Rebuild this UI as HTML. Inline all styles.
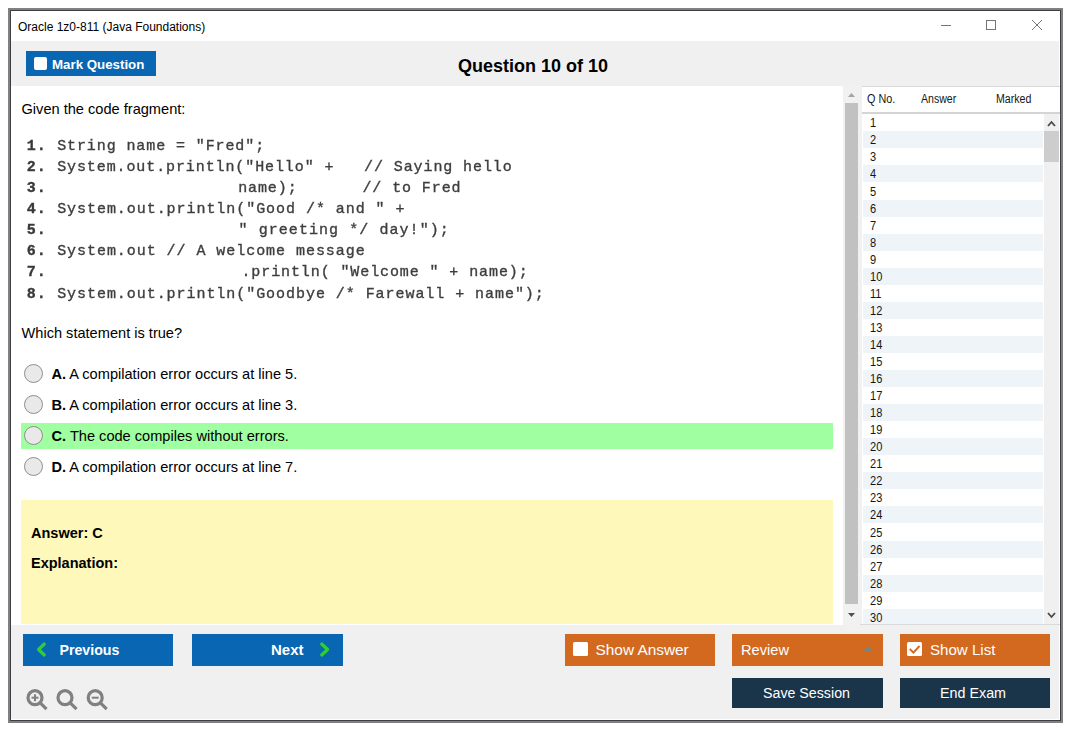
<!DOCTYPE html>
<html>
<head>
<meta charset="utf-8">
<title>Oracle 1z0-811 (Java Foundations)</title>
<style>
*{box-sizing:border-box;margin:0;padding:0}
html,body{width:1075px;height:735px;background:#fff;overflow:hidden}
body{font-family:"Liberation Sans",sans-serif;color:#000;position:relative}
.abs{position:absolute}
svg{position:absolute;overflow:visible}
#win-outer{left:8px;top:8px;width:1055px;height:715px;background:#808080}
#win-dark{left:10px;top:10px;width:1051px;height:711px;background:#3b3e42}
#win{left:11px;top:11px;width:1049px;height:709px;background:#fff}
#title{left:18px;top:20px;font-size:12px;line-height:14px;color:#000;white-space:nowrap}
#toolbar{left:11px;top:41px;width:1048px;height:45px;background:#f0f0f0}
#markbtn{left:26px;top:51px;width:130px;height:25px;background:#0866b3}
#markbtn .cb{left:8px;top:6px;width:13px;height:13px;background:#fff;border-radius:2px}
#markbtn .tx{left:26px;top:6px;font-size:13.3px;line-height:16px;font-weight:bold;color:#fff;white-space:nowrap}
#qtitle{left:458px;top:55px;font-size:18px;line-height:22px;font-weight:bold;white-space:nowrap}
#main{left:11px;top:86px;width:832px;height:539px;background:#fff}
.qt{left:21.5px;font-size:14.6px;line-height:18px;white-space:nowrap;color:#000;transform-origin:0 14px;transform:scaleY(1.04)}
#code{left:27px;top:135.6px;font-family:"Liberation Mono",monospace;font-size:15px;letter-spacing:0.9px;line-height:21.14px;color:#3e3e3e;-webkit-text-stroke:0.35px #3e3e3e;white-space:pre;filter:blur(0.3px)}
.cl{position:absolute;left:0;height:21.14px}
.cl span{position:absolute;top:0}
#code b{font-weight:bold;color:#383838}
.radio{left:24px;width:19px;height:19px;border-radius:50%;background:#e9e9e9;border:1px solid #8e8e8e}
.opt{left:51.5px;font-size:14.6px;line-height:18px;white-space:nowrap;transform-origin:0 14px;transform:scaleY(1.04)}
#hl{left:21px;top:423px;width:812px;height:26px;background:#a0ffa0}
#ansbox{left:21px;top:500px;width:812px;height:124px;background:#fef8ba}
.ab{left:31px;font-size:14.5px;font-weight:bold;line-height:16px;white-space:nowrap}
#mscroll{left:843px;top:86px;width:19px;height:539px;background:#f1f1f1}
#mthumb{left:845px;top:103px;width:13px;height:501px;background:#c1c1c1}
#list{left:862px;top:86px;width:198px;height:539px;background:#fff;border-top:1px solid #d9d9d9;border-bottom:1px solid #dcdcdc}
.lh{top:92px;font-size:12px;line-height:14px;color:#151515;white-space:nowrap;transform-origin:0 0;transform:scaleX(.9)}
#lhline{left:862px;top:112px;width:198px;height:2px;background:#d4d4d4}
.row{left:863px;width:180px;height:17px;font-size:12px;line-height:17px;color:#151515}
.row span{position:absolute;left:7px;top:1px;transform-origin:0 0;transform:scaleX(.92);white-space:nowrap}
#lscroll{left:1044px;top:114px;width:15px;height:510px;background:#f0f0f0}
#lthumb{left:1044px;top:131px;width:15px;height:31px;background:#cdcdcd}
#bottom{left:11px;top:625px;width:1048px;height:94px;background:#f0f0f0}
.btn{height:32px;width:150px;top:634px}
.btn2{height:30px;width:150px;top:678px}
.blue{background:#0866b3}
.orange{background:#d2691e}
.navy{background:#1a354a}
.btxt{color:#fff;white-space:nowrap;transform-origin:0 50%}
.bb{font-weight:bold;line-height:18px;top:7.25px}
.br{font-size:15.4px;line-height:18px;top:7px}
.cb2{width:15px;height:14px;background:#fff;border-radius:1.5px;top:8px}
</style>
</head>
<body>
<div class="abs" id="win-outer"></div>
<div class="abs" id="win-dark"></div>
<div class="abs" id="win"></div>
<div class="abs" id="title">Oracle 1z0-811 (Java Foundations)</div>
<svg style="left:936px;top:15px" width="115" height="20" viewBox="0 0 115 20">
 <g stroke="#757575" stroke-width="1" fill="none" shape-rendering="crispEdges">
  <line x1="5" y1="10.5" x2="15" y2="10.5"/>
  <rect x="50.5" y="5.5" width="9" height="9"/>
 </g>
 <g stroke="#757575" stroke-width="1" fill="none">
  <line x1="96" y1="5" x2="106" y2="15"/><line x1="106" y1="5" x2="96" y2="15"/>
 </g>
</svg>
<div class="abs" id="toolbar"></div>
<div class="abs" id="markbtn"><div class="abs cb"></div><div class="abs tx">Mark Question</div></div>
<div class="abs" id="qtitle">Question 10 of 10</div>
<div class="abs" id="main"></div>

<div class="abs qt" style="top:100px">Given the code fragment:</div>
<div class="abs" id="code">
<div class="cl" style="top:0.00px"><span style="left:-0.25px"><b>1.</b></span><span style="left:30.15px">String name = "Fred";</span></div>
<div class="cl" style="top:21.14px"><span style="left:-0.25px"><b>2.</b></span><span style="left:30.15px">System.out.println("Hello" +   // Saying hello</span></div>
<div class="cl" style="top:42.28px"><span style="left:-0.25px"><b>3.</b></span><span style="left:211.15px">name);</span><span style="left:335.45px">// to Fred</span></div>
<div class="cl" style="top:63.42px"><span style="left:-0.25px"><b>4.</b></span><span style="left:30.15px;letter-spacing:0.95px">System.out.println("Good /* and " +</span></div>
<div class="cl" style="top:84.56px"><span style="left:-0.25px"><b>5.</b></span><span style="left:211.55px;letter-spacing:1.06px">" greeting */ day!");</span></div>
<div class="cl" style="top:105.70px"><span style="left:-0.25px"><b>6.</b></span><span style="left:30.15px;letter-spacing:0.95px">System.out // A welcome message</span></div>
<div class="cl" style="top:126.84px"><span style="left:-0.25px"><b>7.</b></span><span style="left:214.45px">.println( "Welcome " + name);</span></div>
<div class="cl" style="top:147.98px"><span style="left:-0.25px"><b>8.</b></span><span style="left:30.15px;letter-spacing:0.95px">System.out.println("Goodbye /* Farewall + name");</span></div>
</div>
<div class="abs qt" style="top:324px">Which statement is true?</div>

<div class="abs" id="hl"></div>
<div class="abs radio" style="top:364px"></div>
<div class="abs opt" style="top:365px"><b>A.</b> A compilation error occurs at line 5.</div>
<div class="abs radio" style="top:395px"></div>
<div class="abs opt" style="top:396px"><b>B.</b> A compilation error occurs at line 3.</div>
<div class="abs radio" style="top:426px"></div>
<div class="abs opt" style="top:427px"><b>C.</b> The code compiles without errors.</div>
<div class="abs radio" style="top:457px"></div>
<div class="abs opt" style="top:458px"><b>D.</b> A compilation error occurs at line 7.</div>

<div class="abs" id="ansbox"></div>
<div class="abs ab" style="top:525px">Answer: C</div>
<div class="abs ab" style="top:555px">Explanation:</div>

<div class="abs" id="mscroll"></div>
<div class="abs" id="mthumb"></div>
<svg style="left:843px;top:86px" width="19" height="539" viewBox="0 0 19 539">
 <path d="M5 11 L8.5 7 L12 11 Z" fill="#a3a3a3"/>
 <path d="M5 527 L8.5 531 L12 527 Z" fill="#505050"/>
</svg>

<div class="abs" id="list"></div>
<div class="abs lh" style="left:867px">Q No.</div>
<div class="abs lh" style="left:921px;transform:scaleX(.88)">Answer</div>
<div class="abs lh" style="left:996px;transform:scaleX(.885)">Marked</div>
<div class="abs" id="lhline"></div>
<div class="abs row" style="top:114.30px;background:#fff"><span>1</span></div>
<div class="abs row" style="top:131.35px;background:#eff4f9"><span>2</span></div>
<div class="abs row" style="top:148.40px;background:#fff"><span>3</span></div>
<div class="abs row" style="top:165.45px;background:#eff4f9"><span>4</span></div>
<div class="abs row" style="top:182.50px;background:#fff"><span>5</span></div>
<div class="abs row" style="top:199.55px;background:#eff4f9"><span>6</span></div>
<div class="abs row" style="top:216.60px;background:#fff"><span>7</span></div>
<div class="abs row" style="top:233.65px;background:#eff4f9"><span>8</span></div>
<div class="abs row" style="top:250.70px;background:#fff"><span>9</span></div>
<div class="abs row" style="top:267.75px;background:#eff4f9"><span>10</span></div>
<div class="abs row" style="top:284.80px;background:#fff"><span>11</span></div>
<div class="abs row" style="top:301.85px;background:#eff4f9"><span>12</span></div>
<div class="abs row" style="top:318.90px;background:#fff"><span>13</span></div>
<div class="abs row" style="top:335.95px;background:#eff4f9"><span>14</span></div>
<div class="abs row" style="top:353.00px;background:#fff"><span>15</span></div>
<div class="abs row" style="top:370.05px;background:#eff4f9"><span>16</span></div>
<div class="abs row" style="top:387.10px;background:#fff"><span>17</span></div>
<div class="abs row" style="top:404.15px;background:#eff4f9"><span>18</span></div>
<div class="abs row" style="top:421.20px;background:#fff"><span>19</span></div>
<div class="abs row" style="top:438.25px;background:#eff4f9"><span>20</span></div>
<div class="abs row" style="top:455.30px;background:#fff"><span>21</span></div>
<div class="abs row" style="top:472.35px;background:#eff4f9"><span>22</span></div>
<div class="abs row" style="top:489.40px;background:#fff"><span>23</span></div>
<div class="abs row" style="top:506.45px;background:#eff4f9"><span>24</span></div>
<div class="abs row" style="top:523.50px;background:#fff"><span>25</span></div>
<div class="abs row" style="top:540.55px;background:#eff4f9"><span>26</span></div>
<div class="abs row" style="top:557.60px;background:#fff"><span>27</span></div>
<div class="abs row" style="top:574.65px;background:#eff4f9"><span>28</span></div>
<div class="abs row" style="top:591.70px;background:#fff"><span>29</span></div>
<div class="abs row" style="top:608.75px;background:#eff4f9"><span>30</span></div>
<div class="abs" style="left:860px;top:624px;width:200px;height:1px;background:#dadada"></div>
<div class="abs" id="lscroll"></div>
<div class="abs" id="lthumb"></div>
<svg style="left:1044px;top:114px" width="15" height="510" viewBox="0 0 15 510">
 <path d="M4 12 L7.5 8 L11 12" fill="none" stroke="#484848" stroke-width="1.8"/>
 <path d="M4 499 L7.5 503 L11 499" fill="none" stroke="#484848" stroke-width="1.8"/>
</svg>

<div class="abs" id="bottom"></div>
<div class="abs btn blue" style="left:23px">
 <svg style="left:13.3px;top:8.1px" width="11" height="15" viewBox="0 0 11 15"><path d="M8.3 2 L2.6 7.5 L8.3 13" fill="none" stroke="#32cd32" stroke-width="3.2" stroke-linecap="round" stroke-linejoin="round"/></svg>
 <div class="abs btxt bb" style="left:36.5px;font-size:14.2px">Previous</div>
</div>
<div class="abs btn blue" style="left:192px;width:151px">
 <div class="abs btxt bb" style="left:79px;font-size:15px">Next</div>
 <svg style="left:127.3px;top:8.1px" width="11" height="15" viewBox="0 0 11 15"><path d="M2.7 2 L8.6 7.5 L2.7 13" fill="none" stroke="#32cd32" stroke-width="3.2" stroke-linecap="round" stroke-linejoin="round"/></svg>
</div>
<div class="abs btn orange" style="left:565px">
 <div class="abs cb2" style="left:8px"></div>
 <div class="abs btxt br" style="left:30.5px">Show Answer</div>
</div>
<div class="abs btn orange" style="left:732px;width:151px">
 <div class="abs btxt br" style="left:9px;transform:scaleX(.95)">Review</div>
 <svg style="left:130.5px;top:11.8px" width="10.4" height="6" viewBox="0 0 10.4 6"><path d="M0 6 L5.2 0 L10.4 6 Z" fill="#808080"/></svg>
</div>
<div class="abs btn orange" style="left:900px">
 <div class="abs cb2" style="left:7px"></div>
 <svg style="left:7px;top:8px" width="15" height="15" viewBox="0 0 15 15"><path d="M2.8 6.9 L6.4 10.6 L12.5 4" fill="none" stroke="#d2691e" stroke-width="1.9"/></svg>
 <div class="abs btxt br" style="left:30px;transform:scaleX(.98)">Show List</div>
</div>
<div class="abs btn2 navy" style="left:732px;width:151px">
 <div class="abs btxt br" style="left:31px;top:6px;transform:scaleX(.924)">Save Session</div>
</div>
<div class="abs btn2 navy" style="left:900px">
 <div class="abs btxt br" style="left:40px;top:6px;transform:scaleX(.93)">End Exam</div>
</div>

<svg style="left:24px;top:687px" width="90" height="26" viewBox="0 0 90 26">
 <g fill="none" stroke="#808080" stroke-width="3.2">
  <circle cx="11" cy="10.7" r="7"/><line x1="16" y1="15.7" x2="22.5" y2="22.2"/>
  <circle cx="41" cy="10.7" r="7"/><line x1="46" y1="15.7" x2="52.5" y2="22.2"/>
  <circle cx="71.2" cy="10.7" r="7"/><line x1="76.2" y1="15.7" x2="82.7" y2="22.2"/>
 </g>
 <g fill="none" stroke="#808080" stroke-width="2">
  <line x1="7.5" y1="10.7" x2="14.5" y2="10.7"/><line x1="11" y1="7.2" x2="11" y2="14.2"/>
  <line x1="67.7" y1="10.7" x2="74.7" y2="10.7"/>
 </g>
</svg>
</body>
</html>
